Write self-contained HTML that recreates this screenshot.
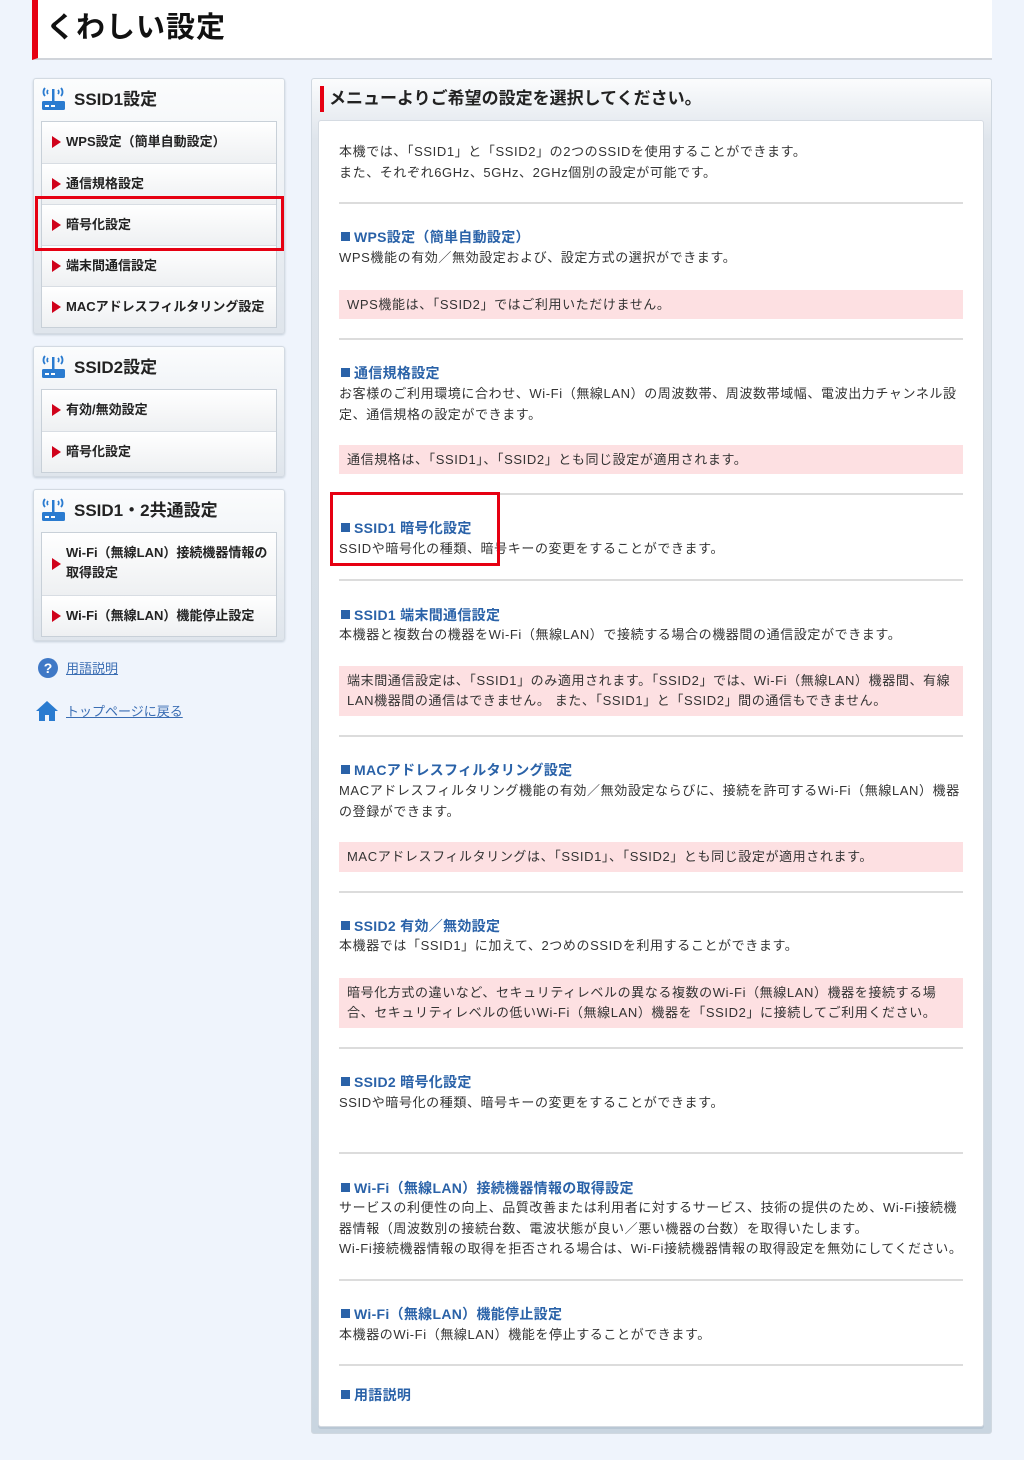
<!DOCTYPE html>
<html><head><meta charset="utf-8">
<style>
*{margin:0;padding:0;box-sizing:border-box}
body{width:1024px;height:1460px;background:#eff4fc;font-family:"Liberation Sans","Noto Sans CJK JP",sans-serif;color:#333;position:relative;overflow:hidden}
.a{position:absolute}
.title{left:32px;top:0;width:960px;height:60px;background:#fff;border-left:6px solid #e60012;border-bottom:2px solid #d0d4da;font-size:29px;font-weight:bold;color:#111;padding:4px 0 0 8px;letter-spacing:1px}
.panel{left:33px;width:252px;background:linear-gradient(#fbfcfd,#dfe5ec);border:1px solid #d3dae2;border-radius:3px;box-shadow:0 1px 2px #c3cdd8}
.ph{height:42px;font-size:17px;font-weight:bold;color:#222;padding:6px 0 0 40px;position:relative}
.ico{position:absolute;left:7px;top:6px}
.items{margin:0 7px 7px 7px;border:1px solid #c8d0d8;background:#fff}
.it{height:41px;border-top:1px solid #d8dde3;background:linear-gradient(#fff,#eef0f2);font-size:13px;font-weight:bold;color:#222;padding:9px 0 0 24px;position:relative;white-space:nowrap}
.it:first-child{border-top:none}
.it:before{content:"";position:absolute;left:10px;top:14px;border-left:9px solid #d0021b;border-top:6px solid transparent;border-bottom:6px solid transparent}
.lnk{font-size:13px;color:#3a6db3;text-decoration:underline}
.rp{left:311px;top:78px;width:681px;height:1356px;background:linear-gradient(#fbfcfd,#dfe5ec 60px,#c9d5e0);border:1px solid #d0d8e0;border-radius:3px}
.in{left:318px;top:120px;width:666px;height:1307px;background:#fff;border:1px solid #d5dbe2;border-radius:3px;box-shadow:0 2px 0 #b9c7d4}
.t{position:absolute;left:339px;font-size:13px;line-height:20.5px;color:#333;width:624px;letter-spacing:0.6px}
.h{position:absolute;left:341px;font-size:14px;font-weight:bold;color:#2a62a8;letter-spacing:0.3px}
.h:before{content:"";display:inline-block;width:9px;height:9px;background:#2a62a8;margin-right:4px;vertical-align:1px}
.hr{position:absolute;left:339px;width:624px;height:2px;background:#dcdcdc}
.pk{position:absolute;left:339px;width:624px;background:#fde0e2;font-size:13px;line-height:20px;padding:5px 8px;color:#333;letter-spacing:0.6px}
</style></head><body>
<div class="a title">くわしい設定</div>

<svg width="0" height="0" style="position:absolute"><defs><g id="rt"><path d="M4 11a6 6 0 0 1 0-8M20 11a6 6 0 0 0 0-8M7 9a3 3 0 0 1 0-4M17 9a3 3 0 0 0 0-4" stroke="#2a7bd0" stroke-width="1.8" fill="none"/><rect x="11" y="4" width="2.5" height="12" fill="#2a7bd0"/><rect x="1" y="16" width="23" height="9" rx="1.5" fill="#2a7bd0"/><rect x="4" y="20" width="4" height="2" fill="#fff"/><rect x="10" y="20" width="4" height="2" fill="#fff"/></g></defs></svg>

<div class="a panel" style="top:78px;height:256px">
<div class="ph"><svg class="ico" width="26" height="26"><use href="#rt"/></svg>SSID1設定</div>
<div class="items"><div class="it">WPS設定（簡単自動設定）</div><div class="it">通信規格設定</div><div class="it">暗号化設定</div><div class="it">端末間通信設定</div><div class="it">MACアドレスフィルタリング設定</div></div>
</div>
<div class="a" style="left:35px;top:196px;width:249px;height:55px;border:3px solid #e60012"></div>

<div class="a panel" style="top:346px;height:131px">
<div class="ph"><svg class="ico" width="26" height="26"><use href="#rt"/></svg>SSID2設定</div>
<div class="items"><div class="it">有効/無効設定</div><div class="it">暗号化設定</div></div>
</div>

<div class="a panel" style="top:489px;height:152px">
<div class="ph"><svg class="ico" width="26" height="26"><use href="#rt"/></svg>SSID1・2共通設定</div>
<div class="items"><div class="it two" style="height:62px;line-height:20px;padding-top:10px;white-space:normal;padding-right:6px">Wi-Fi（無線LAN）接続機器情報の取得設定</div><div class="it">Wi-Fi（無線LAN）機能停止設定</div></div>
</div>
<style>.it.two:before{top:25px}</style>

<svg class="a" style="left:37px;top:657px" width="22" height="22"><circle cx="11" cy="11" r="10" fill="#3f78c6"/><text x="11" y="16" text-anchor="middle" font-size="14" font-weight="bold" fill="#fff" font-family="Liberation Sans">?</text></svg>
<div class="a lnk" style="left:66px;top:658px">用語説明</div>
<svg class="a" style="left:36px;top:700px" width="22" height="22"><path d="M11 1L0 11h3v10h6v-6h4v6h6V11h3z" fill="#2a7bd0"/></svg>
<div class="a lnk" style="left:66px;top:701px">トップページに戻る</div>

<div class="a rp"></div>
<div class="a" style="left:320px;top:86px;width:4px;height:26px;background:#e60012"></div>
<div class="a" style="left:329px;top:84px;font-size:17px;font-weight:bold;color:#222">メニューよりご希望の設定を選択してください。</div>
<div class="a in"></div>

<div class="t" style="top:142px">本機では、「SSID1」と「SSID2」の2つのSSIDを使用することができます。<br>また、それぞれ6GHz、5GHz、2GHz個別の設定が可能です。</div>
<div class="hr" style="top:202px"></div>
<div class="h" style="top:227px">WPS設定（簡単自動設定）</div>
<div class="t" style="top:248px">WPS機能の有効／無効設定および、設定方式の選択ができます。</div>
<div class="pk" style="top:290px;height:29px">WPS機能は、「SSID2」ではご利用いただけません。</div>
<div class="hr" style="top:338px"></div>
<div class="h" style="top:363px">通信規格設定</div>
<div class="t" style="top:384px">お客様のご利用環境に合わせ、Wi-Fi（無線LAN）の周波数帯、周波数帯域幅、電波出力チャンネル設定、通信規格の設定ができます。</div>
<div class="pk" style="top:445px;height:29px">通信規格は、「SSID1」、「SSID2」とも同じ設定が適用されます。</div>
<div class="hr" style="top:493px"></div>
<div class="h" style="top:518px">SSID1 暗号化設定</div>
<div class="t" style="top:539px">SSIDや暗号化の種類、暗号キーの変更をすることができます。</div>
<div class="a" style="left:330px;top:492px;width:170px;height:74px;border:3px solid #e60012"></div>
<div class="hr" style="top:579px"></div>
<div class="h" style="top:605px">SSID1 端末間通信設定</div>
<div class="t" style="top:625px">本機器と複数台の機器をWi-Fi（無線LAN）で接続する場合の機器間の通信設定ができます。</div>
<div class="pk" style="top:666px;height:50px">端末間通信設定は、「SSID1」のみ適用されます。「SSID2」では、Wi-Fi（無線LAN）機器間、有線LAN機器間の通信はできません。 また、「SSID1」と「SSID2」間の通信もできません。</div>
<div class="hr" style="top:735px"></div>
<div class="h" style="top:760px">MACアドレスフィルタリング設定</div>
<div class="t" style="top:781px">MACアドレスフィルタリング機能の有効／無効設定ならびに、接続を許可するWi-Fi（無線LAN）機器の登録ができます。</div>
<div class="pk" style="top:842px;height:30px">MACアドレスフィルタリングは、「SSID1」、「SSID2」とも同じ設定が適用されます。</div>
<div class="hr" style="top:891px"></div>
<div class="h" style="top:916px">SSID2 有効／無効設定</div>
<div class="t" style="top:936px">本機器では「SSID1」に加えて、2つめのSSIDを利用することができます。</div>
<div class="pk" style="top:978px;height:50px">暗号化方式の違いなど、セキュリティレベルの異なる複数のWi-Fi（無線LAN）機器を接続する場合、セキュリティレベルの低いWi-Fi（無線LAN）機器を「SSID2」に接続してご利用ください。</div>
<div class="hr" style="top:1047px"></div>
<div class="h" style="top:1072px">SSID2 暗号化設定</div>
<div class="t" style="top:1093px">SSIDや暗号化の種類、暗号キーの変更をすることができます。</div>
<div class="hr" style="top:1152px"></div>
<div class="h" style="top:1178px">Wi-Fi（無線LAN）接続機器情報の取得設定</div>
<div class="t" style="top:1198px">サービスの利便性の向上、品質改善または利用者に対するサービス、技術の提供のため、Wi-Fi接続機器情報（周波数別の接続台数、電波状態が良い／悪い機器の台数）を取得いたします。<br>Wi-Fi接続機器情報の取得を拒否される場合は、Wi-Fi接続機器情報の取得設定を無効にしてください。</div>
<div class="hr" style="top:1279px"></div>
<div class="h" style="top:1304px">Wi-Fi（無線LAN）機能停止設定</div>
<div class="t" style="top:1325px">本機器のWi-Fi（無線LAN）機能を停止することができます。</div>
<div class="hr" style="top:1364px"></div>
<div class="h" style="top:1385px">用語説明</div>
</body></html>
